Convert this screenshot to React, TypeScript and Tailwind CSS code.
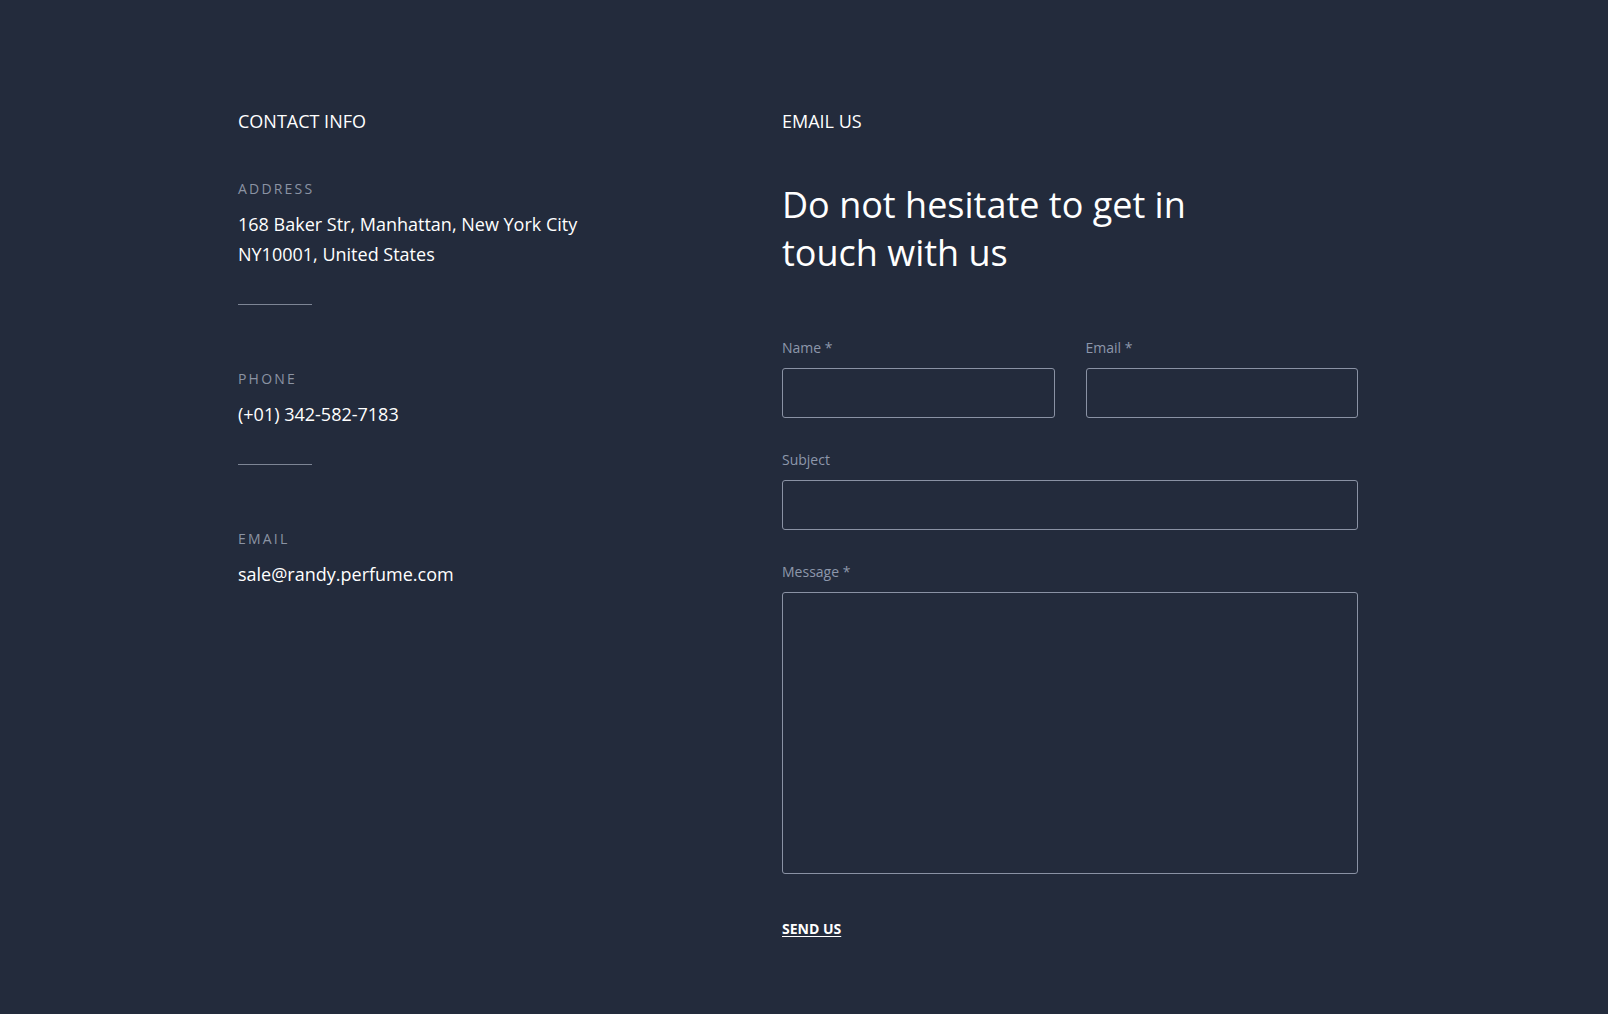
import React from "react";

const font = { fontFamily: '"Open Sans", "Noto Sans", sans-serif' };

function InfoItem({ label, children, divider = true }: { label: string; children: React.ReactNode; divider?: boolean }) {
  return (
    <div className="mb-[63px]">
      <div className="text-[14px] leading-[21px] tracking-[2.2px] text-[#8b93a3] uppercase">{label}</div>
      <div className="mt-[10px] text-[18px] leading-[30px] text-white">{children}</div>
      {divider && <div className="mt-[35px] h-px w-[74px] bg-[#7d8595]" />}
    </div>
  );
}

function Field({ label, className = "", tall = false }: { label: string; className?: string; tall?: boolean }) {
  return (
    <div className={className}>
      <div className="text-[14px] leading-[21px] text-[#8d97ab]">{label}</div>
      {tall ? (
        <textarea className="mt-[10px] block h-[282px] w-full resize-none rounded-[3px] border border-[#8a92a4] bg-transparent outline-none" />
      ) : (
        <input className="mt-[10px] block h-[50px] w-full rounded-[3px] border border-[#8a92a4] bg-transparent outline-none" />
      )}
    </div>
  );
}

export default function App() {
  return (
    <div className="min-h-screen w-full bg-[#232b3c]" style={font}>
      <div className="flex pl-[238px] pt-[108px]">
        <div className="w-[544px] shrink-0">
          <div className="text-[18px] leading-[27px] text-white">CONTACT INFO</div>
          <div className="mt-[43px]">
            <InfoItem label="Address">
              168 Baker Str, Manhattan, New York City
              <br />
              NY10001, United States
            </InfoItem>
            <InfoItem label="Phone">(+01) 342-582-7183</InfoItem>
            <InfoItem label="Email" divider={false}>sale@randy.perfume.com</InfoItem>
          </div>
        </div>
        <div className="w-[576px] shrink-0">
          <div className="text-[18px] leading-[27px] text-white">EMAIL US</div>
          <h2 className="mt-[46px] max-w-[440px] text-[36px] leading-[48px] font-normal text-white">
            Do not hesitate to get in touch with us
          </h2>
          <div className="mt-[60px] grid grid-cols-2 gap-x-[31px]">
            <Field label="Name *" />
            <Field label="Email *" />
          </div>
          <Field label="Subject" className="mt-[31px]" />
          <Field label="Message *" className="mt-[31px]" tall />
          <div className="mt-[42px] pb-[60px]">
            <a href="#" className="text-[14px] font-bold leading-[21px] text-white underline underline-offset-2">
              SEND US
            </a>
          </div>
        </div>
      </div>
    </div>
  );
}
